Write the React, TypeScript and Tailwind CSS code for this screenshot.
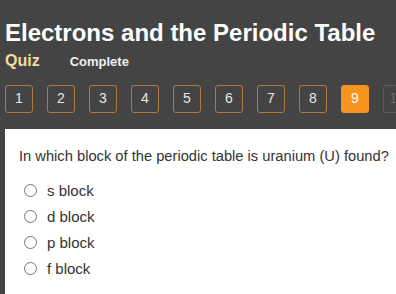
import React from "react";

export default function App() {
  const nums = [1, 2, 3, 4, 5, 6, 7, 8, 9, 10];
  const opts = ["s block", "d block", "p block", "f block"];
  return (
    <div
      className="w-[396px] h-[294px] overflow-hidden bg-[#444444] flex flex-col"
      style={{ fontFamily: '"Liberation Sans", Arial, sans-serif' }}
    >
      <div className="pl-[5px] pt-[19px]">
        <h1 className="text-[24px] leading-[28px] font-bold text-white whitespace-nowrap">
          Electrons and the Periodic Table
        </h1>
        <div className="flex items-baseline mt-[4px]">
          <span className="text-[16px] leading-[20px] font-bold text-[#f2dca2]">Quiz</span>
          <span className="ml-[30px] text-[13px] font-bold text-[#f0f0f0]">Complete</span>
        </div>
      </div>
      <div className="flex gap-[14px] pl-[5px] mt-[13px] whitespace-nowrap">
        {nums.map((n) => (
          <div
            key={n}
            className={
              n === 9
                ? "shrink-0 w-[28px] h-[28px] rounded-[3px] bg-[#f7941d] border border-[#f7941d] text-white flex items-center justify-center text-[14px]"
                : n === 10
                ? "shrink-0 w-[28px] h-[28px] rounded-[3px] border border-[#5c5c5c] text-[#6a6a6a] flex items-center justify-center text-[14px]"
                : "shrink-0 w-[28px] h-[28px] rounded-[3px] border border-[#b07a3c] text-[#e8e8e8] flex items-center justify-center text-[14px]"
            }
          >
            {n}
          </div>
        ))}
      </div>
      <div className="ml-[5px] mt-[16px] flex-1 bg-white pl-[14px] pt-[18px]">
        <p className="text-[14.7px] leading-[18px] text-[#333333] whitespace-nowrap">
          In which block of the periodic table is uranium (U) found?
        </p>
        <div className="mt-[17px] flex flex-col gap-[8px]">
          {opts.map((o) => (
            <label key={o} className="flex items-center h-[18px]">
              <span className="ml-[5px] w-[13px] h-[13px] rounded-full border border-[#767676] bg-white shrink-0" />
              <span className="ml-[10px] text-[15px] leading-[18px] text-[#333333]">{o}</span>
            </label>
          ))}
        </div>
      </div>
    </div>
  );
}
